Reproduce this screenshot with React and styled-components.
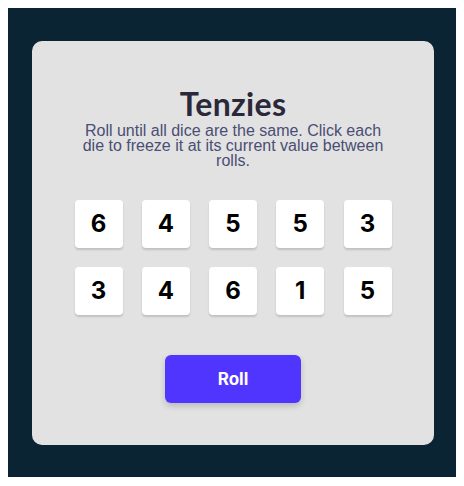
import React, { useState } from "react";
import styled, { createGlobalStyle } from "styled-components";

const GlobalStyle = createGlobalStyle`
  body {
    margin: 8px;
    background: #ffffff;
  }
  * {
    box-sizing: border-box;
  }
`;

const Main = styled.main`
  width: 449px;
  height: 469px;
  background-color: #0b2434;
  display: flex;
  align-items: center;
  padding-left: 24px;
`;

const Board = styled.div`
  width: 402px;
  height: 404px;
  background-color: #e2e2e2;
  border-radius: 10px;
  display: flex;
  flex-direction: column;
  align-items: center;
  padding-top: 44px;
`;

const Title = styled.h1`
  margin: 0;
  font-family: Lato, "Noto Sans", sans-serif;
  font-weight: 700;
  font-size: 32px;
  line-height: 38px;
  letter-spacing: 0.3px;
  color: #2b283a;
`;

const Instructions = styled.p`
  margin: 0;
  width: 310px;
  font-family: "Liberation Sans", Arial, sans-serif;
  font-size: 16px;
  line-height: 15px;
  text-align: center;
  color: #4a4e74;
`;

const DiceGrid = styled.div`
  display: grid;
  grid-template-columns: repeat(5, 48px);
  grid-auto-rows: 48px;
  column-gap: 19.25px;
  row-gap: 19px;
  margin-top: 32px;
`;

const Die = styled.button`
  border: none;
  border-radius: 4px;
  background-color: ${({ $held }) => ($held ? "#59e391" : "#ffffff")};
  box-shadow: 0 2px 2px rgba(0, 0, 0, 0.15);
  font-family: Inter, "Noto Sans", sans-serif;
  font-weight: 700;
  font-size: 24px;
  color: #000000;
  display: flex;
  align-items: center;
  justify-content: center;
  padding: 0;
  cursor: pointer;
`;

const RollButton = styled.button`
  margin-top: 40px;
  width: 136px;
  height: 48px;
  border: none;
  border-radius: 6px;
  background-color: #5035ff;
  color: #ffffff;
  font-family: Inter, "Noto Sans", sans-serif;
  font-weight: 700;
  font-size: 17px;
  box-shadow: 0 3px 6px rgba(0, 0, 0, 0.18);
  cursor: pointer;
`;

const startDice = [6, 4, 5, 5, 3, 3, 4, 6, 1, 5];

const App = () => {
  const [dice, setDice] = useState(
    startDice.map((value, id) => ({ id, value, held: false }))
  );

  const toggle = id =>
    setDice(prev => prev.map(d => (d.id === id ? { ...d, held: !d.held } : d)));

  const roll = () =>
    setDice(prev =>
      prev.map(d =>
        d.held ? d : { ...d, value: Math.ceil(Math.random() * 6) }
      )
    );

  return (
    <>
      <GlobalStyle />
      <Main>
        <Board>
          <Title>Tenzies</Title>
          <Instructions>
            Roll until all dice are the same. Click each die to freeze it at
            its current value between rolls.
          </Instructions>
          <DiceGrid>
            {dice.map(d => (
              <Die key={d.id} $held={d.held} onClick={() => toggle(d.id)}>
                {d.value}
              </Die>
            ))}
          </DiceGrid>
          <RollButton onClick={roll}>Roll</RollButton>
        </Board>
      </Main>
    </>
  );
};

export default App;
